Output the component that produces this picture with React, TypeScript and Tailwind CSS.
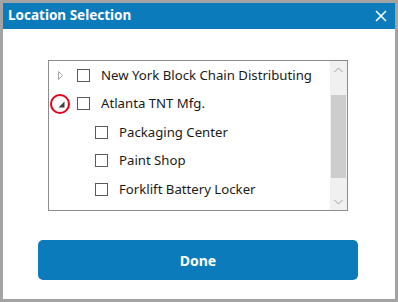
import React from "react";

const font = { fontFamily: '"Noto Sans", "Open Sans", sans-serif' };

function Check() {
  return <div className="w-[13px] h-[13px] border border-[#5a5a5a] bg-white shrink-0" />;
}

function Row({ indent, tri, label }: { indent: boolean; tri?: "closed" | "open"; label: string }) {
  return (
    <div className="h-[28.5px] flex items-center relative">
      <div className="w-[28px] h-full flex items-center justify-start pl-[8px] relative shrink-0">
        {tri === "closed" && (
          <svg width="6" height="9" viewBox="0 0 6 9" className="ml-[1px]">
            <path d="M0.5 0.5 L4.5 4.5 L0.5 8.5 Z" fill="none" stroke="#a6a6a6" strokeWidth="1" />
          </svg>
        )}
        {tri === "open" && (
          <>
            <svg width="7" height="7" viewBox="0 0 7 7" className="ml-[1px] mt-[1px]">
              <path d="M6.5 0.5 L6.5 6.5 L0.5 6.5 Z" fill="#404040" />
            </svg>
            <div className="absolute left-[1px] top-[4px] w-[20px] h-[20px] rounded-full border-2 border-[#e0001b]" />
          </>
        )}
      </div>
      {indent && <div className="w-[18px] shrink-0" />}
      <Check />
      <span className="ml-[11px] text-[13.2px] text-[#1a1a1a] leading-none">{label}</span>
    </div>
  );
}

export default function App() {
  return (
    <div className="w-[398px] h-[302px] bg-[#a3a3a3] p-[3px]" style={font}>
      <div className="w-full h-full bg-white flex flex-col">
        <div className="h-[26px] bg-[#0b7bbb] flex items-center justify-between pl-[5px] pr-[8px] shrink-0">
          <span className="text-white font-bold text-[13.5px] leading-none">Location Selection</span>
          <svg width="12" height="12" viewBox="0 0 12 12">
            <path d="M1 1 L11 11 M11 1 L1 11" stroke="white" strokeWidth="1.6" />
          </svg>
        </div>
        <div className="ml-[45px] mt-[31px] w-[300px] h-[151px] border border-[#8c8c8c] flex">
          <div className="flex-1 flex flex-col">
            <Row indent={false} tri="closed" label="New York Block Chain Distributing" />
            <Row indent={false} tri="open" label="Atlanta TNT Mfg." />
            <Row indent label="Packaging Center" />
            <Row indent label="Paint Shop" />
            <Row indent label="Forklift Battery Locker" />
          </div>
          <div className="w-[17px] bg-[#f0f0f0] flex flex-col">
            <div className="h-[17px] flex items-center justify-center">
              <svg width="9" height="6" viewBox="0 0 9 6">
                <path d="M0.5 5 L4.5 1 L8.5 5" fill="none" stroke="#a0a0a0" strokeWidth="1" />
              </svg>
            </div>
            <div className="h-[17px]" />
            <div className="h-[83px] bg-[#cdcdcd] mx-[1px]" />
            <div className="flex-1" />
            <div className="h-[17px] flex items-center justify-center">
              <svg width="9" height="6" viewBox="0 0 9 6">
                <path d="M0.5 1 L4.5 5 L8.5 1" fill="none" stroke="#a0a0a0" strokeWidth="1" />
              </svg>
            </div>
          </div>
        </div>
        <button className="ml-[35px] mt-[29px] w-[320px] h-[40px] rounded-[5px] bg-[#0b7bbb] text-white font-bold text-[14px]">
          Done
        </button>
      </div>
    </div>
  );
}
